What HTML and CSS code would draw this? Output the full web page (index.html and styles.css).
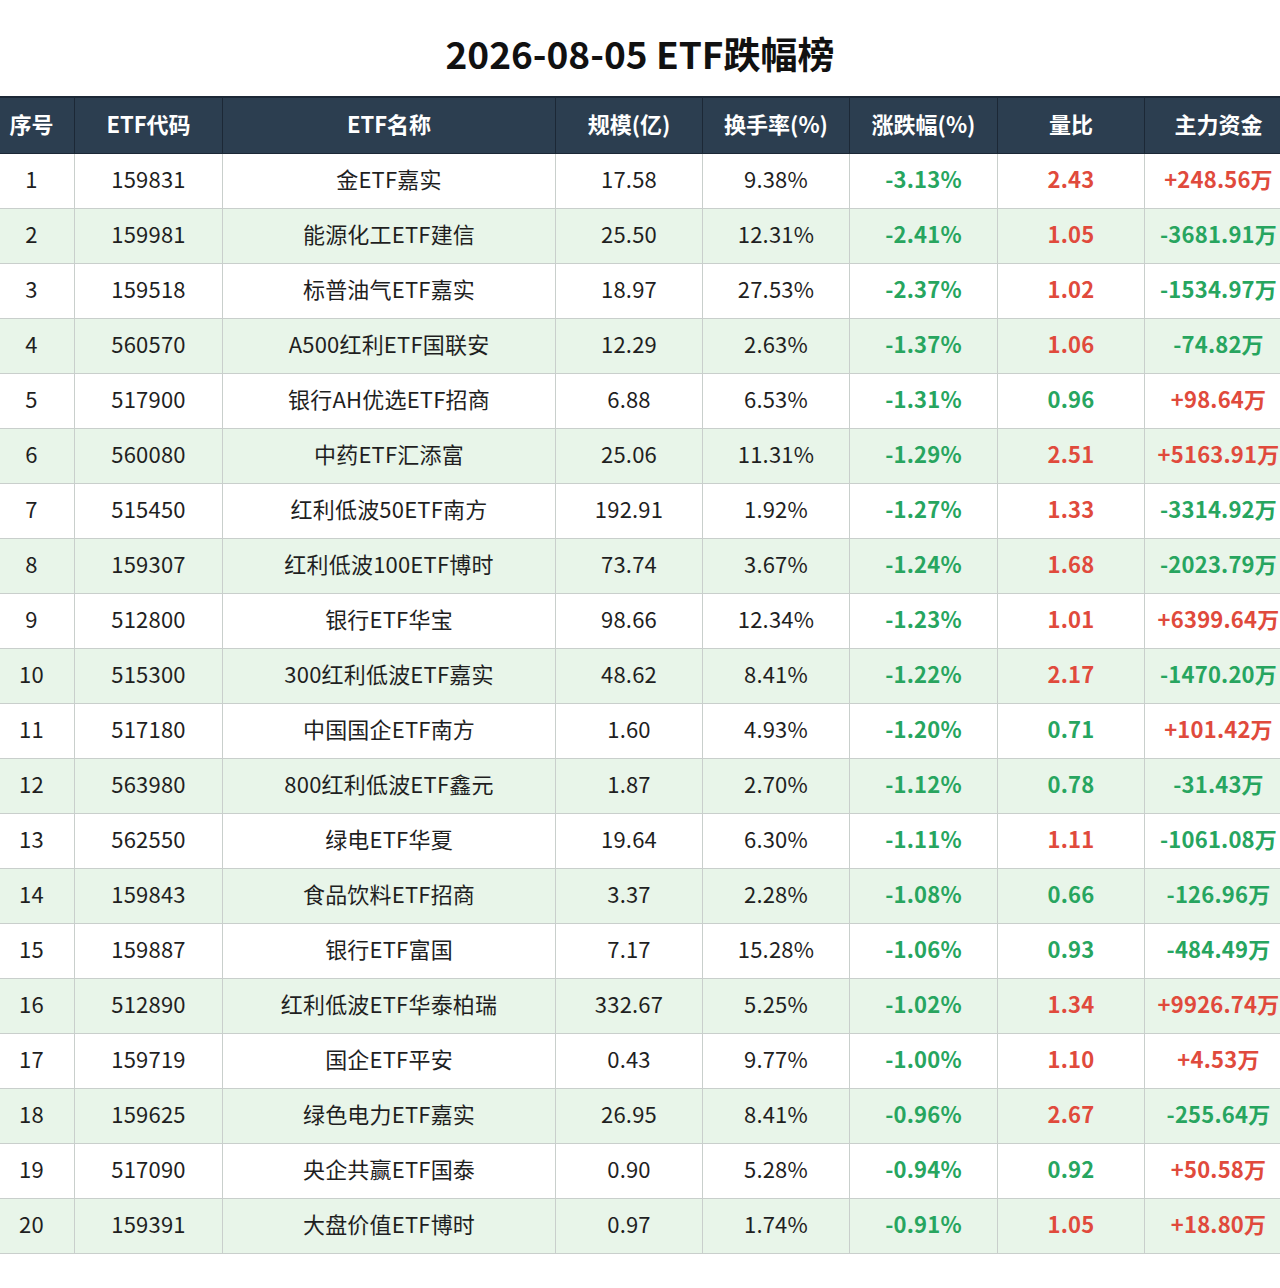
FILE: index.html
```html
<!DOCTYPE html>
<html lang="zh-CN">
<head>
<meta charset="utf-8">
<title>2026-08-05 ETF跌幅榜</title>
<link rel="stylesheet" href="styles.css">
</head>
<body>
<div class="page">
<h1 class="title">2026-08-05 ETF跌幅榜</h1>
<table class="etf">
<colgroup>
<col class="c-idx"><col class="c-code"><col class="c-name"><col class="c-w"><col class="c-w"><col class="c-w2"><col class="c-w"><col class="c-w2">
</colgroup>
<thead>
<tr><th>序号</th><th>ETF代码</th><th>ETF名称</th><th>规模(亿)</th><th>换手率(%)</th><th>涨跌幅(%)</th><th>量比</th><th>主力资金</th></tr>
</thead>
<tbody>
<tr><td>1</td><td>159831</td><td>金ETF嘉实</td><td>17.58</td><td>9.38%</td><td class="b g">-3.13%</td><td class="b r">2.43</td><td class="b r">+248.56万</td></tr>
<tr><td>2</td><td>159981</td><td>能源化工ETF建信</td><td>25.50</td><td>12.31%</td><td class="b g">-2.41%</td><td class="b r">1.05</td><td class="b g">-3681.91万</td></tr>
<tr><td>3</td><td>159518</td><td>标普油气ETF嘉实</td><td>18.97</td><td>27.53%</td><td class="b g">-2.37%</td><td class="b r">1.02</td><td class="b g">-1534.97万</td></tr>
<tr><td>4</td><td>560570</td><td>A500红利ETF国联安</td><td>12.29</td><td>2.63%</td><td class="b g">-1.37%</td><td class="b r">1.06</td><td class="b g">-74.82万</td></tr>
<tr><td>5</td><td>517900</td><td>银行AH优选ETF招商</td><td>6.88</td><td>6.53%</td><td class="b g">-1.31%</td><td class="b g">0.96</td><td class="b r">+98.64万</td></tr>
<tr><td>6</td><td>560080</td><td>中药ETF汇添富</td><td>25.06</td><td>11.31%</td><td class="b g">-1.29%</td><td class="b r">2.51</td><td class="b r">+5163.91万</td></tr>
<tr><td>7</td><td>515450</td><td>红利低波50ETF南方</td><td>192.91</td><td>1.92%</td><td class="b g">-1.27%</td><td class="b r">1.33</td><td class="b g">-3314.92万</td></tr>
<tr><td>8</td><td>159307</td><td>红利低波100ETF博时</td><td>73.74</td><td>3.67%</td><td class="b g">-1.24%</td><td class="b r">1.68</td><td class="b g">-2023.79万</td></tr>
<tr><td>9</td><td>512800</td><td>银行ETF华宝</td><td>98.66</td><td>12.34%</td><td class="b g">-1.23%</td><td class="b r">1.01</td><td class="b r">+6399.64万</td></tr>
<tr><td>10</td><td>515300</td><td>300红利低波ETF嘉实</td><td>48.62</td><td>8.41%</td><td class="b g">-1.22%</td><td class="b r">2.17</td><td class="b g">-1470.20万</td></tr>
<tr><td>11</td><td>517180</td><td>中国国企ETF南方</td><td>1.60</td><td>4.93%</td><td class="b g">-1.20%</td><td class="b g">0.71</td><td class="b r">+101.42万</td></tr>
<tr><td>12</td><td>563980</td><td>800红利低波ETF鑫元</td><td>1.87</td><td>2.70%</td><td class="b g">-1.12%</td><td class="b g">0.78</td><td class="b g">-31.43万</td></tr>
<tr><td>13</td><td>562550</td><td>绿电ETF华夏</td><td>19.64</td><td>6.30%</td><td class="b g">-1.11%</td><td class="b r">1.11</td><td class="b g">-1061.08万</td></tr>
<tr><td>14</td><td>159843</td><td>食品饮料ETF招商</td><td>3.37</td><td>2.28%</td><td class="b g">-1.08%</td><td class="b g">0.66</td><td class="b g">-126.96万</td></tr>
<tr><td>15</td><td>159887</td><td>银行ETF富国</td><td>7.17</td><td>15.28%</td><td class="b g">-1.06%</td><td class="b g">0.93</td><td class="b g">-484.49万</td></tr>
<tr><td>16</td><td>512890</td><td>红利低波ETF华泰柏瑞</td><td>332.67</td><td>5.25%</td><td class="b g">-1.02%</td><td class="b r">1.34</td><td class="b r">+9926.74万</td></tr>
<tr><td>17</td><td>159719</td><td>国企ETF平安</td><td>0.43</td><td>9.77%</td><td class="b g">-1.00%</td><td class="b r">1.10</td><td class="b r">+4.53万</td></tr>
<tr><td>18</td><td>159625</td><td>绿色电力ETF嘉实</td><td>26.95</td><td>8.41%</td><td class="b g">-0.96%</td><td class="b r">2.67</td><td class="b g">-255.64万</td></tr>
<tr><td>19</td><td>517090</td><td>央企共赢ETF国泰</td><td>0.90</td><td>5.28%</td><td class="b g">-0.94%</td><td class="b g">0.92</td><td class="b r">+50.58万</td></tr>
<tr><td>20</td><td>159391</td><td>大盘价值ETF博时</td><td>0.97</td><td>1.74%</td><td class="b g">-0.91%</td><td class="b r">1.05</td><td class="b r">+18.80万</td></tr>
</tbody>
</table>
</div>
</body>
</html>
```
FILE: styles.css
```css
html, body {
  margin: 0;
  padding: 0;
  background: #ffffff;
  overflow: hidden;
}
body {
  font-family: "Noto Sans CJK SC", "Noto Sans", sans-serif;
  color: #1f1f1f;
}
.page {
  width: 1280px;
}
.title {
  margin: 0;
  width: 1280px;
  height: 96px;
  box-sizing: border-box;
  padding-top: 10px;
  display: flex;
  align-items: center;
  justify-content: center;
  font-size: 37px;
  font-weight: 700;
  color: #111;
}
.etf {
  border-collapse: collapse;
  table-layout: fixed;
  width: 1304px;
  margin-left: -12px;
  font-size: 22px;
}
.c-idx { width: 86px; }
.c-code { width: 148px; }
.c-name { width: 333px; }
.c-w { width: 147px; }
.c-w2 { width: 148px; }
.etf th {
  background: #2c3e50;
  color: #ffffff;
  font-weight: 700;
  height: 50px;
  padding: 0 0 5px 0;
  border-left: 1px solid #1c2836;
  border-right: 1px solid #1c2836;
  border-top: 2px solid #1c2836;
  border-bottom: 1px solid #1c2836;
  text-align: center;
  white-space: nowrap;
}
.etf td {
  height: 47px;
  padding: 0 0 7px 0;
  text-align: center;
  white-space: nowrap;
  border: 1px solid #c9cfcc;
  letter-spacing: 0.2px;
}
.etf tbody tr:nth-child(even) td {
  background: #e8f5e9;
}
.b { font-weight: 700; }
.g { color: #27a55f; }
.r { color: #e04a3c; }
```
